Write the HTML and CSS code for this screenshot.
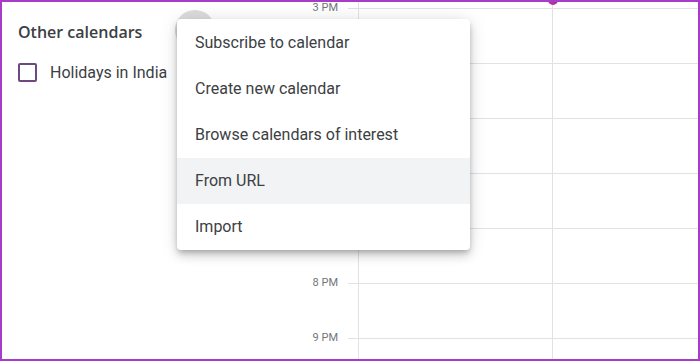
FILE: index.html
```html
<!DOCTYPE html>
<html>
<head>
    <link rel="stylesheet" href="styles.css">
</head>
<body>
    <div class="frame">
        <div class="sidebar">
            <div class="section-title">Other calendars</div>
            <div class="cal-row">
                <span class="checkbox"></span>
                <span class="cal-name">Holidays in India</span>
            </div>
            <div class="add-button"></div>
            <div class="menu">
                <div class="menu-item">Subscribe to calendar</div>
                <div class="menu-item">Create new calendar</div>
                <div class="menu-item">Browse calendars of interest</div>
                <div class="menu-item active">From URL</div>
                <div class="menu-item">Import</div>
            </div>
        </div>
        <div class="calendar">
            <div class="times">
                <div class="time">3 PM</div>
                <div class="time">4 PM</div>
                <div class="time">5 PM</div>
                <div class="time">6 PM</div>
                <div class="time">7 PM</div>
                <div class="time">8 PM</div>
                <div class="time">9 PM</div>
            </div>
            <div class="days">
                <div class="day"></div>
                <div class="day today">
                    <span class="now-dot"></span>
                </div>
            </div>
        </div>
    </div>
</body>
</html>
```

FILE: styles.css
```css
body {
    margin: 0;
    font-family: Roboto, "Liberation Sans", sans-serif;
    color: #3c4043;
}
.frame {
    width: 700px;
    height: 361px;
    box-sizing: border-box;
    border: 2px solid #a83cc9;
    display: flex;
    overflow: hidden;
    position: relative;
    background: white;
}
.sidebar {
    width: 298px;
    flex-shrink: 0;
    padding: 18px 0 0 16px;
    box-sizing: border-box;
}
.section-title {
    font-family: "Open Sans", Roboto, sans-serif;
    font-size: 16px;
    font-weight: 600;
    line-height: 24px;
}
.cal-row {
    display: flex;
    align-items: center;
    gap: 13px;
    height: 32px;
    margin-top: 12px;
}
.checkbox {
    width: 15px;
    height: 15px;
    border: 2px solid #70487f;
    border-radius: 2px;
}
.cal-name {
    font-size: 16px;
}
.add-button {
    position: absolute;
    left: 173px;
    top: 8px;
    width: 40px;
    height: 40px;
    border-radius: 50%;
    background: #dcdcdc;
}
.menu {
    position: absolute;
    left: 175px;
    top: 17px;
    width: 293px;
    padding-top: 1px;
    box-sizing: border-box;
    background: white;
    border-radius: 4px;
    box-shadow: 0 3px 5px -1px rgba(0,0,0,.2), 0 6px 10px 0 rgba(0,0,0,.14), 0 1px 18px 0 rgba(0,0,0,.12);
    z-index: 2;
}
.menu-item {
    height: 46px;
    line-height: 46px;
    padding-left: 18px;
    font-size: 16px;
}
.menu-item.active {
    background: #f1f3f5;
}
.calendar {
    flex: 1;
    display: flex;
}
.times {
    width: 48px;
    margin-top: -2px;
    padding-right: 10px;
    box-sizing: border-box;
}
.time {
    height: 55px;
    line-height: 16px;
    font-size: 11px;
    color: #70757a;
    text-align: right;
}
.days {
    flex: 1;
    display: flex;
    padding-left: 10px;
    background-image: linear-gradient(#e3e1e6 1px, transparent 1px);
    background-size: 100% 55px;
    background-position: 0 6px;
}
.day {
    width: 193px;
    border-left: 1px solid #e3e1e6;
    position: relative;
}
.day.today {
    flex: 1;
}
.now-dot {
    position: absolute;
    left: -5px;
    top: -7px;
    width: 10px;
    height: 10px;
    border-radius: 50%;
    background: #b0329f;
}
```
